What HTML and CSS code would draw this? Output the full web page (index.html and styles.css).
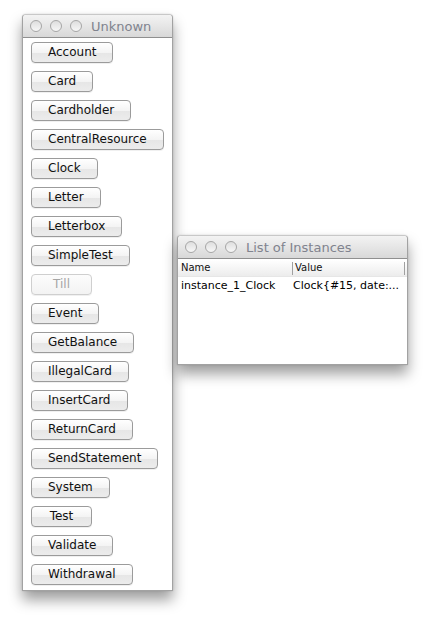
FILE: index.html
```html
<!DOCTYPE html>
<html>
<head>
<meta charset="utf-8">
<link rel="stylesheet" href="styles.css">
</head>
<body>
<div class="desktop">
  <div class="window win-classes">
    <div class="titlebar">
      <div class="lights"><span class="light"></span><span class="light"></span><span class="light"></span></div>
      <div class="title">Unknown</div>
    </div>
    <div class="buttons">
      <button class="btn">Account</button>
      <button class="btn">Card</button>
      <button class="btn">Cardholder</button>
      <button class="btn">CentralResource</button>
      <button class="btn">Clock</button>
      <button class="btn">Letter</button>
      <button class="btn">Letterbox</button>
      <button class="btn">SimpleTest</button>
      <button class="btn disabled">Till</button>
      <button class="btn">Event</button>
      <button class="btn">GetBalance</button>
      <button class="btn">IllegalCard</button>
      <button class="btn">InsertCard</button>
      <button class="btn">ReturnCard</button>
      <button class="btn">SendStatement</button>
      <button class="btn">System</button>
      <button class="btn">Test</button>
      <button class="btn">Validate</button>
      <button class="btn">Withdrawal</button>
    </div>
  </div>
  <div class="window win-instances">
    <div class="titlebar">
      <div class="lights"><span class="light"></span><span class="light"></span><span class="light"></span></div>
      <div class="title">List of Instances</div>
    </div>
    <div class="table">
      <div class="thead">
        <div class="th col-name">Name</div>
        <div class="th col-value">Value</div>
      </div>
      <div class="row">
        <div class="td col-name">instance_1_Clock</div>
        <div class="td col-value">Clock{#15, date:...</div>
      </div>
    </div>
  </div>
</div>
</body>
</html>
```

FILE: styles.css
```css
html, body {
  margin: 0;
  padding: 0;
  background: #ffffff;
}
.desktop {
  position: relative;
  width: 432px;
  height: 635px;
  overflow: hidden;
  font-family: "DejaVu Sans", "Liberation Sans", sans-serif;
}
.window {
  position: absolute;
  box-sizing: border-box;
  background: #ffffff;
  border: 1px solid #a2a2a2;
  border-top-color: #c8c8c8;
  border-radius: 4px 4px 0 0;
  box-shadow: 0 9px 14px rgba(0, 0, 0, 0.38), 0 0 2px rgba(0, 0, 0, 0.15);
  display: flex;
  flex-direction: column;
}
.win-classes {
  left: 22px;
  top: 14px;
  width: 151px;
  height: 577px;
}
.win-instances {
  left: 177px;
  top: 235px;
  width: 231px;
  height: 130px;
}
.titlebar {
  height: 22px;
  flex: none;
  display: flex;
  align-items: center;
  background: linear-gradient(#f3f3f3, #e6e6e6 50%, #d8d8d8);
  border-bottom: 1px solid #8f8f8f;
  border-radius: 4px 4px 0 0;
}
.lights {
  display: flex;
  gap: 8px;
  padding-left: 7px;
}
.light {
  width: 12px;
  height: 12px;
  border-radius: 50%;
  box-sizing: border-box;
  border: 1px solid #a6a6a6;
  background: linear-gradient(#dedede, #f7f7f7);
}
.title {
  margin-left: 9px;
  font-size: 13px;
  color: #80838e;
  white-space: nowrap;
}
.buttons {
  display: flex;
  flex-direction: column;
  align-items: flex-start;
  gap: 8px;
  padding: 4px 0 0 8px;
}
.btn {
  height: 21px;
  min-width: 61px;
  box-sizing: border-box;
  padding: 0 16px;
  margin: 0;
  font-family: "DejaVu Sans", "Liberation Sans", sans-serif;
  font-size: 12px;
  color: #111111;
  background: linear-gradient(#ffffff, #f4f4f4 50%, #e6e6e6 51%, #ececec);
  border: 1px solid #9b9b9b;
  border-radius: 4px;
  box-shadow: 0 1px 0 rgba(0, 0, 0, 0.06);
  white-space: nowrap;
  line-height: 19px;
}
.btn.disabled {
  color: #a5a5a5;
  border-color: #cfcfcf;
  background: linear-gradient(#fcfcfc, #f3f3f3);
}
.table {
  flex: 1;
  display: flex;
  flex-direction: column;
}
.thead {
  display: flex;
  height: 16px;
  margin-top: 1px;
  background: linear-gradient(#ffffff, #ececec);
  border-bottom: 1px solid #e6e6e6;
}
.th {
  font-size: 10px;
  color: #111;
  box-sizing: border-box;
}
.col-name {
  width: 114px;
  padding-left: 3px;
  flex: none;
}
.col-value {
  width: 113px;
  flex: none;
}
.th.col-name {
  line-height: 16px;
}
.th.col-value {
  padding-left: 2px;
  border-left: 1px solid #a0a0a0;
  border-right: 1px solid #a0a0a0;
  height: 13px;
  margin-top: 2px;
  line-height: 12px;
}
.row {
  display: flex;
  height: 18px;
}
.td {
  font-size: 11px;
  line-height: 18px;
  color: #000;
  white-space: nowrap;
  overflow: hidden;
  box-sizing: border-box;
}
.td.col-value {
  padding-left: 1px;
}
```
